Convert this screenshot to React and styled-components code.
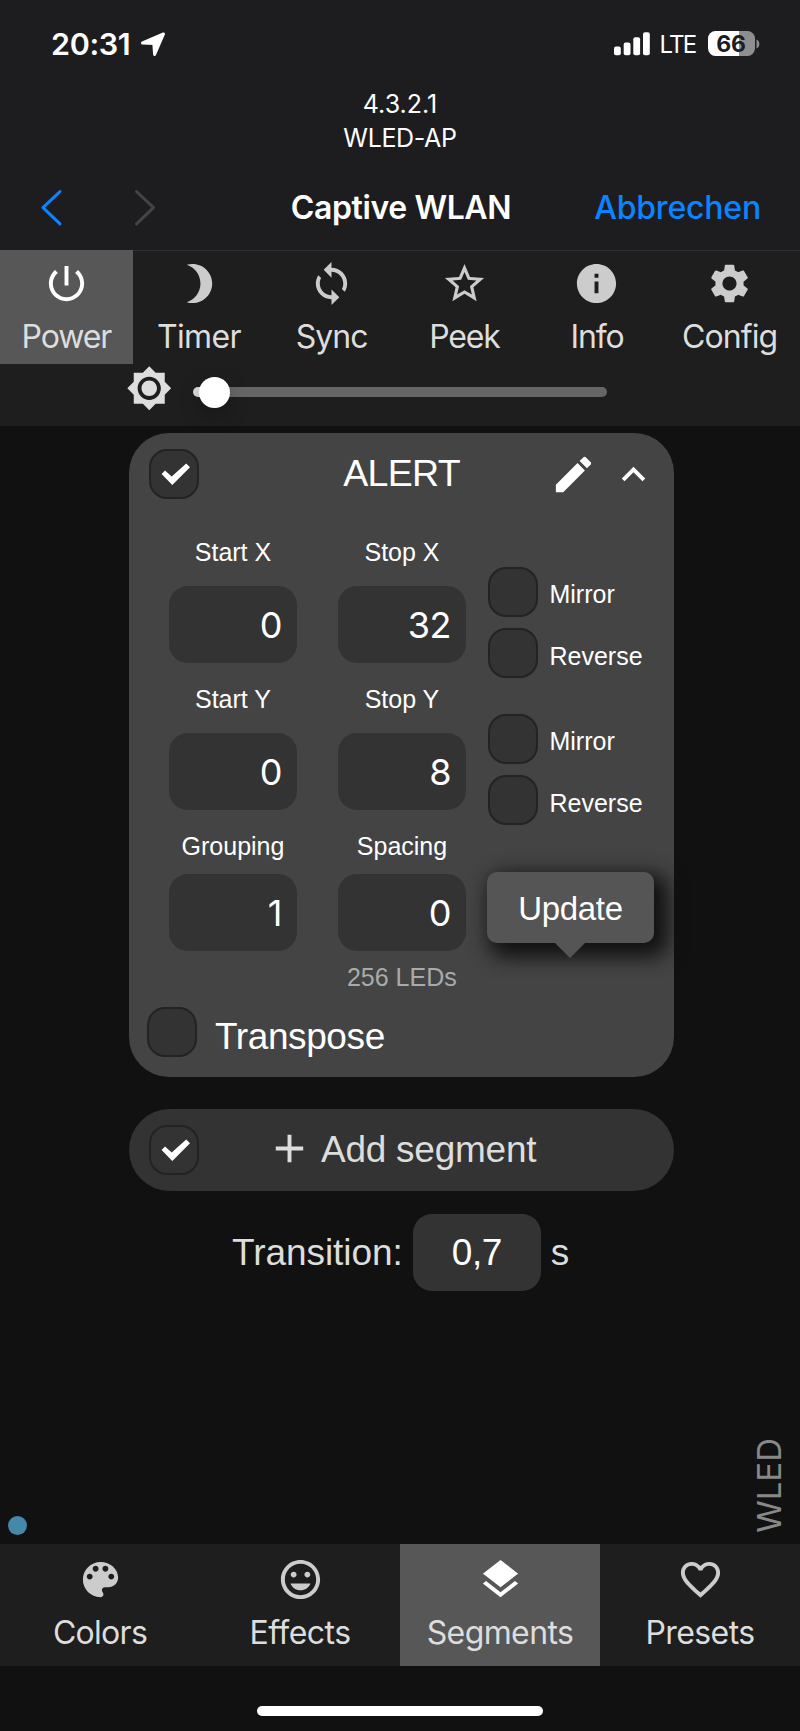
import React from "react";
import styled, { createGlobalStyle } from "styled-components";

const GlobalStyle = createGlobalStyle`
  * { box-sizing: border-box; }
  body { margin: 0; background: #111; }
`;

const ui = `Inter, "Liberation Sans", sans-serif`;
const helv = `"Liberation Sans", Arial, sans-serif`;

const Page = styled.div`
  width: 800px;
  height: 1731px;
  display: flex;
  flex-direction: column;
  background: #111;
  color: #fff;
  font-family: ${helv};
  overflow: hidden;
`;

const Header = styled.header`
  height: 250px;
  background: #1d1d1f;
  font-family: ${ui};
`;

const StatusBar = styled.div`
  height: 87px;
  display: flex;
  align-items: center;
  justify-content: space-between;
  padding: 0 40.5px 0 51px;
`;

const StatusGroup = styled.div`
  display: flex;
  align-items: center;
`;

const Clock = styled.span`
  font-size: 30.5px;
  font-weight: 600;
  line-height: 40px;
  letter-spacing: -0.35px;
  margin-right: 10px;
`;

const Carrier = styled.span`
  font-size: 24px;
  line-height: 30px;
  letter-spacing: -1.7px;
  margin: 2px 12px 0 9px;
`;

const Battery = styled.div`
  width: 47px;
  height: 25px;
  border-radius: 7.5px;
  background: linear-gradient(to right, #fff 31px, #8e8e8f 31px);
  color: #1d1d1f;
  font-size: 23px;
  font-weight: 700;
  line-height: 26px;
  text-align: center;
  letter-spacing: -0.3px;
`;

const NetworkInfo = styled.div`
  font-size: 25px;
  line-height: 34px;
  text-align: center;
  height: 68px;
`;

const InfoLine = styled.div`
  letter-spacing: ${(p) => p.$track}px;
`;

const TitleBar = styled.div`
  display: grid;
  grid-template-columns: 200px 1fr 200px;
  align-items: center;
  height: 95px;
  padding: 10px 39px 0 39px;
  font-size: 32px;
  line-height: 40px;
`;

const Arrows = styled.div`
  display: flex;
  gap: 69px;
`;

const Title = styled.div`
  font-weight: 600;
  text-align: center;
  white-space: nowrap;
  letter-spacing: -0.4px;
  padding-left: 2px;
`;

const Cancel = styled.div`
  color: #0a84ff;
  font-weight: 500;
  text-align: right;
  letter-spacing: -0.2px;
`;

const TabBar = styled.nav`
  display: grid;
  grid-template-columns: repeat(${(p) => p.$count}, 1fr);
  height: ${(p) => p.$height}px;
  padding-right: ${(p) => (p.$ruled ? 4 : 0)}px;
  background: #1e1e1e;
  box-shadow: ${(p) => (p.$ruled ? "inset 0 1px 0 #2e2e30" : "none")};
  flex: none;
`;

const TabItem = styled.div`
  display: flex;
  flex-direction: column;
  align-items: center;
  min-width: 0;
  padding-top: ${(p) => p.$top}px;
  background: ${(p) => (p.$active ? "#575757" : "transparent")};
  color: ${(p) => (p.$active ? "#fff" : "#ccc")};
`;

const TabLabel = styled.span`
  margin-top: 10px;
  color: #ddd;
  font-family: ${ui};
  font-size: 32px;
  line-height: 40px;
  letter-spacing: ${(p) => p.$track}px;
`;

const BrightnessRow = styled.div`
  height: 61.5px;
  background: #1e1e1e;
  display: flex;
  padding: 1px 0 0 125.5px;
  color: #ddd;
  flex: none;
`;

const Track = styled.div`
  width: 414px;
  height: 10px;
  margin: 22px 0 0 21px;
  border-radius: 5px;
  background: linear-gradient(to right, #ddd 21px, #666 21px);
  display: flex;
  align-items: center;
  padding-left: 6px;
`;

const Thumb = styled.div`
  width: 31px;
  height: 31px;
  border-radius: 50%;
  background: #fff;
  box-shadow: 0 8px 20px rgba(0, 0, 0, 0.25);
  flex: none;
`;

const Content = styled.main`
  flex: 1;
  display: flex;
  flex-direction: column;
  padding-top: 7.5px;
`;

const Card = styled.section`
  width: 545px;
  height: 644px;
  margin-left: 129.3px;
  border-radius: 40px;
  background: #444;
`;

const CardHeader = styled.div`
  display: grid;
  grid-template-columns: 140px 1fr 140px;
  align-items: center;
  height: 82px;
  padding: 0 17px 0 19.7px;
`;

const SegmentName = styled.div`
  font-size: 37.5px;
  line-height: 44px;
  text-align: center;
  letter-spacing: -0.7px;
  padding: 0 3px 2px 0;
`;

const HeaderActions = styled.div`
  display: flex;
  justify-content: flex-end;
  gap: 13px;
`;

const Box = styled.span`
  display: block;
  flex: none;
  width: 50px;
  height: 50px;
  border-radius: 18px;
  border: 2px solid #232323;
  background: #333;
`;

const Fields = styled.div`
  display: grid;
  grid-template-columns: 169px 150px 1fr;
  grid-template-rows: 147px 147px 120px;
  padding: 22px 0 0 39.7px;
`;

const Field = styled.label`
  display: flex;
  flex-direction: column;
  gap: ${(p) => (p.$tight ? 13 : 19)}px;
  width: 128px;
`;

const FieldLabel = styled.span`
  font-size: 25px;
  line-height: 30px;
  text-align: center;
`;

const NumberBox = styled.span`
  display: block;
  width: 128px;
  height: 77px;
  border-radius: 19px;
  background: #333;
  color: #fff;
  font-family: ${(p) => (p.$center ? helv : ui)};
  font-size: ${(p) => (p.$center ? 37 : 36)}px;
  line-height: ${(p) => (p.$center ? 78 : 79)}px;
  text-align: ${(p) => (p.$center ? "center" : "right")};
  padding-right: ${(p) => (p.$center ? 0 : 15)}px;
  letter-spacing: -0.5px;
`;

const Flags = styled.div`
  display: flex;
  flex-direction: column;
  gap: 11.5px;
  padding-top: 29.5px;
`;

const Flag = styled.div`
  display: flex;
  align-items: center;
  gap: ${(p) => (p.$large ? 18 : 11.5)}px;
  font-size: ${(p) => (p.$large ? 37 : 25)}px;
  line-height: 40px;
  letter-spacing: ${(p) => (p.$large ? -0.4 : 0)}px;
`;

const FlagText = styled.span`
  padding-top: ${(p) => (p.$large ? 10 : 5)}px;
`;

const UpdateButton = styled.div`
  position: relative;
  width: 167px;
  height: 71px;
  margin: 41px 0 0 -1px;
  border-radius: 10px;
  background: #555;
  box-shadow: 8px 8px 20px 6px #111;
  font-size: 33px;
  line-height: 73px;
  text-align: center;
  letter-spacing: -0.3px;

  &::after {
    content: "";
    position: absolute;
    top: 100%;
    left: 68px;
    border: 15.5px solid transparent;
    border-top-color: #555;
    border-bottom: 0;
  }
`;

const LedCount = styled.div`
  padding-top: 11px;
  color: #aaa;
  font-size: 25px;
  line-height: 30px;
  text-align: center;
`;

const TransposeRow = styled.div`
  padding: 15px 0 0 17.7px;
`;

const AddSegment = styled.div`
  display: flex;
  align-items: center;
  width: 545px;
  height: 81.4px;
  margin: 32.3px 0 0 129.3px;
  padding-left: 19.7px;
  border-radius: 41px;
  background: #333;
  color: #ddd;
  font-size: 37px;
  line-height: 44px;
  letter-spacing: -0.25px;

  svg.plus { margin: 0 8px 3px 67px; }
`;

const AddText = styled.span`
  padding-bottom: 0;
`;

const TransitionRow = styled.div`
  display: flex;
  align-items: center;
  gap: 10px;
  margin: 23.5px 0 0 232px;
  color: #ddd;
  font-size: 37px;
  line-height: 44px;
`;

const TransitionText = styled.span`
  letter-spacing: -0.05px;
  padding-top: 1px;
`;

const FooterRow = styled.div`
  flex: 1;
  display: flex;
  align-items: flex-end;
  justify-content: space-between;
  padding: 0 11px 0 7.5px;
`;

const Dot = styled.span`
  width: 19.5px;
  height: 19.5px;
  margin-bottom: 9px;
  border-radius: 50%;
  background: #48a;
`;

const Brand = styled.span`
  writing-mode: vertical-rl;
  transform: rotate(180deg);
  margin-bottom: 11.5px;
  color: #888;
  font-family: ${ui};
  font-size: 33px;
  line-height: 40px;
  letter-spacing: 0;
`;

const HomeArea = styled.div`
  flex: none;
  height: 65px;
  display: flex;
  justify-content: center;
  padding-top: 39.5px;
`;

const HomeIndicator = styled.div`
  width: 286px;
  height: 10px;
  border-radius: 5px;
  background: #fff;
`;

const paths = {
  power: "M13 3h-2v10h2V3zm4.83 2.17l-1.42 1.42C17.99 7.86 19 9.81 19 12c0 3.87-3.13 7-7 7s-7-3.13-7-7c0-2.19 1.01-4.14 2.58-5.42L6.17 5.17C4.23 6.82 3 9.26 3 12c0 4.97 4.03 9 9 9s9-4.03 9-9c0-2.74-1.23-5.18-3.17-6.83z",
  moon: "M9 2c-1.05 0-2.05.16-3 .46 4.06 1.27 7 5.06 7 9.54 0 4.48-2.94 8.27-7 9.54.95.3 1.95.46 3 .46 5.52 0 10-4.48 10-10S14.52 2 9 2z",
  sync: "M12 4V1L8 5l4 4V6c3.31 0 6 2.69 6 6 0 1.01-.25 1.97-.7 2.8l1.46 1.46C19.54 15.03 20 13.57 20 12c0-4.42-3.58-8-8-8zm0 14c-3.31 0-6-2.69-6-6 0-1.01.25-1.97.7-2.8L5.24 7.74C4.46 8.97 4 10.43 4 12c0 4.42 3.58 8 8 8v3l4-4-4-4v3z",
  star: "M22 9.24l-7.19-.62L12 2 9.19 8.63 2 9.24l5.46 4.73L5.82 21 12 17.27 18.18 21l-1.63-7.03L22 9.24zM12 15.4l-3.76 2.27 1-4.28-3.32-2.88 4.38-.38L12 6.1l1.71 4.04 4.38.38-3.32 2.88 1 4.28L12 15.4z",
  info: "M12 2C6.48 2 2 6.48 2 12s4.48 10 10 10 10-4.48 10-10S17.52 2 12 2zm1 15h-2v-6h2v6zm0-8h-2V7h2v2z",
  gear: "M19.14 12.94c.04-.3.06-.61.06-.94 0-.32-.02-.64-.07-.94l2.03-1.58c.18-.14.23-.41.12-.61l-1.92-3.32c-.12-.22-.37-.29-.59-.22l-2.39.96c-.5-.38-1.03-.7-1.62-.94l-.36-2.54c-.04-.24-.24-.41-.48-.41h-3.84c-.24 0-.43.17-.47.41l-.36 2.54c-.59.24-1.13.57-1.62.94l-2.39-.96c-.22-.08-.47 0-.59.22L2.74 8.87c-.12.21-.08.47.12.61l2.03 1.58c-.05.3-.09.63-.09.94s.02.64.07.94l-2.03 1.58c-.18.14-.23.41-.12.61l1.92 3.32c.12.22.37.29.59.22l2.39-.96c.5.38 1.03.7 1.62.94l.36 2.54c.05.24.24.41.48.41h3.84c.24 0 .44-.17.47-.41l.36-2.54c.59-.24 1.13-.56 1.62-.94l2.39.96c.22.08.47 0 .59-.22l1.92-3.32c.12-.22.07-.47-.12-.61l-2.01-1.58zM12 15.6c-1.98 0-3.6-1.62-3.6-3.6s1.62-3.6 3.6-3.6 3.6 1.62 3.6 3.6-1.62 3.6-3.6 3.6z",
  sun: "M20 8.69V4h-4.69L12 .69 8.69 4H4v4.69L.69 12 4 15.31V20h4.69L12 23.31 15.31 20H20v-4.69L23.31 12 20 8.69zM12 18c-3.31 0-6-2.69-6-6s2.69-6 6-6 6 2.69 6 6-2.69 6-6 6zm0-10c-2.21 0-4 1.79-4 4s1.79 4 4 4 4-1.79 4-4-1.79-4-4-4z",
  pencil: "M3 17.25V21h3.75L17.81 9.94l-3.75-3.75L3 17.25zM20.71 7.04c.39-.39.39-1.02 0-1.41l-2.34-2.34c-.39-.39-1.02-.39-1.41 0l-1.83 1.83 3.75 3.75 1.83-1.83z",
  up: "M12 8l-6 6 1.41 1.41L12 10.83l4.59 4.58L18 14z",
  plus: "M19 13h-6v6h-2v-6H5v-2h6V5h2v6h6v2z",
  palette: "M12 3c-4.97 0-9 4.03-9 9s4.03 9 9 9c.83 0 1.5-.67 1.5-1.5 0-.39-.15-.74-.39-1.01-.23-.26-.38-.61-.38-.99 0-.83.67-1.5 1.5-1.5H16c2.76 0 5-2.24 5-5 0-4.42-4.03-8-9-8zm-5.5 9c-.83 0-1.5-.67-1.5-1.5S5.67 9 6.5 9 8 9.67 8 10.5 7.33 12 6.5 12zm3-4C8.67 8 8 7.33 8 6.5S8.67 5 9.5 5s1.5.67 1.5 1.5S10.33 8 9.5 8zm5 0c-.83 0-1.5-.67-1.5-1.5S13.67 5 14.5 5s1.5.67 1.5 1.5S15.33 8 14.5 8zm3 4c-.83 0-1.5-.67-1.5-1.5S16.67 9 17.5 9s1.5.67 1.5 1.5-.67 1.5-1.5 1.5z",
  smile: "M11.99 2C6.47 2 2 6.48 2 12s4.47 10 9.99 10C17.52 22 22 17.52 22 12S17.52 2 11.99 2zM12 20c-4.42 0-8-3.58-8-8s3.58-8 8-8 8 3.58 8 8-3.58 8-8 8zm3.5-9c.83 0 1.5-.67 1.5-1.5S16.33 8 15.5 8 14 8.67 14 9.5s.67 1.5 1.5 1.5zm-7 0c.83 0 1.5-.67 1.5-1.5S9.33 8 8.5 8 7 8.67 7 9.5 7.67 11 8.5 11zm3.5 6.5c2.33 0 4.31-1.46 5.11-3.5H6.89c.8 2.04 2.78 3.5 5.11 3.5z",
  layers: "M11.99 18.54l-7.37-5.73L3 14.07l9 7 9-7-1.63-1.27-7.38 5.74zM12 16l7.36-5.73L21 9l-9-7-9 7 1.63 1.27L12 16z",
  heart: "M16.5 3c-1.74 0-3.41.81-4.5 2.09C10.91 3.81 9.24 3 7.5 3 4.42 3 2 5.42 2 8.5c0 3.78 3.4 6.86 8.55 11.54L12 21.35l1.45-1.32C18.6 15.36 22 12.28 22 8.5 22 5.42 19.58 3 16.5 3zm-4.4 15.55l-.1.1-.1-.1C7.14 14.24 4 11.39 4 8.5 4 6.5 5.5 5 7.5 5c1.54 0 3.04.99 3.57 2.36h1.87C13.46 5.99 14.96 5 16.5 5c2 0 3.5 1.5 3.5 3.5 0 2.89-3.14 5.74-7.9 10.05z",
};

const Icon = ({ name, size = 47 }) => (
  <svg className={name} width={size} height={size} viewBox="0 0 24 24" fill="currentColor">
    <path d={paths[name]} />
  </svg>
);

const Chevron = ({ forward }) => (
  <svg width="25" height="40" viewBox="0 0 25 40" fill="none">
    <path
      d={forward ? "M3.5 3.5L20.5 19.7L3.5 35.9" : "M21 3.5L4 19.7L21 35.9"}
      stroke={forward ? "#444446" : "#0a84ff"}
      strokeWidth="3"
      strokeLinecap="round"
      strokeLinejoin="round"
    />
  </svg>
);

const Checkbox = ({ checked }) => (
  <Box>
    {checked && (
      <svg width="46" height="46" viewBox="2 2 46 46" fill="#fff">
        <path d="M12.6 25L16 21.4L22.7 27.6L37.2 14.6L41 18.3L23.3 36Z" />
      </svg>
    )}
  </Box>
);

const topTabs = [
  { icon: "power", label: "Power", track: -1.1, active: true },
  { icon: "moon", label: "Timer", track: -0.6 },
  { icon: "sync", label: "Sync", track: -1 },
  { icon: "star", label: "Peek", track: -1.2 },
  { icon: "info", label: "Info", track: -1.1 },
  { icon: "gear", label: "Config", track: -0.9 },
];

const bottomTabs = [
  { icon: "palette", label: "Colors", track: -0.7 },
  { icon: "smile", label: "Effects", track: -0.5 },
  { icon: "layers", label: "Segments", track: -0.6 },
  { icon: "heart", label: "Presets", track: -0.6 },
].map((t) => ({ ...t, active: t.label === "Segments" }));

const Tabs = ({ items, height, top, ruled }) => (
  <TabBar $count={items.length} $height={height} $ruled={ruled}>
    {items.map((t) => (
      <TabItem key={t.label} $active={t.active} $top={top}>
        <Icon name={t.icon} />
        <TabLabel $track={t.track}>{t.label}</TabLabel>
      </TabItem>
    ))}
  </TabBar>
);

const NumberField = ({ label, value, tight }) => (
  <Field $tight={tight}>
    <FieldLabel>{label}</FieldLabel>
    <NumberBox>{value}</NumberBox>
  </Field>
);

const AxisFlags = () => (
  <Flags>
    {["Mirror", "Reverse"].map((f) => (
      <Flag key={f}>
        <Checkbox />
        <FlagText>{f}</FlagText>
      </Flag>
    ))}
  </Flags>
);

export default function App() {
  return (
    <Page>
      <GlobalStyle />
      <Header>
        <StatusBar>
          <StatusGroup>
            <Clock>20:31</Clock>
            <svg width="26" height="26" viewBox="0 0 26 26">
              <path d="M2.5 12L23.5 3L14.6 23.5L13.8 12.4Z" fill="#fff" stroke="#fff" strokeWidth="3" strokeLinejoin="round" />
            </svg>
          </StatusGroup>
          <StatusGroup>
            <svg width="36" height="24" viewBox="0 0 36 24" fill="#fff">
              <rect x="0" y="14.5" width="6.8" height="8.7" rx="2" />
              <rect x="9.7" y="10.5" width="6.8" height="12.7" rx="2" />
              <rect x="19.3" y="5.3" width="6.8" height="17.9" rx="2" />
              <rect x="29" y="0.3" width="6.8" height="22.9" rx="2" />
            </svg>
            <Carrier>LTE</Carrier>
            <Battery>66</Battery>
            <svg width="5" height="10" viewBox="0 0 5 10">
              <path d="M1.5 0.5C5.3 2 5.3 8 1.5 9.5Z" fill="#8e8e8f" />
            </svg>
          </StatusGroup>
        </StatusBar>
        <NetworkInfo>
          <InfoLine $track={0}>4.3.2.1</InfoLine>
          <InfoLine $track={-0.35}>WLED-AP</InfoLine>
        </NetworkInfo>
        <TitleBar>
          <Arrows>
            <Chevron />
            <Chevron forward />
          </Arrows>
          <Title>Captive WLAN</Title>
          <Cancel>Abbrechen</Cancel>
        </TitleBar>
      </Header>

      <Tabs items={topTabs} height={114} top={10} ruled />
      <BrightnessRow>
        <Icon name="sun" size={46.5} />
        <Track>
          <Thumb />
        </Track>
      </BrightnessRow>

      <Content>
        <Card>
          <CardHeader>
            <Checkbox checked />
            <SegmentName>ALERT</SegmentName>
            <HeaderActions>
              <Icon name="pencil" />
              <Icon name="up" />
            </HeaderActions>
          </CardHeader>
          <Fields>
            <NumberField label="Start X" value="0" />
            <NumberField label="Stop X" value="32" />
            <AxisFlags />
            <NumberField label="Start Y" value="0" />
            <NumberField label="Stop Y" value="8" />
            <AxisFlags />
            <NumberField label="Grouping" value="1" tight />
            <NumberField label="Spacing" value="0" tight />
            <UpdateButton>Update</UpdateButton>
          </Fields>
          <LedCount>256 LEDs</LedCount>
          <TransposeRow>
            <Flag $large>
              <Checkbox />
              <FlagText $large>Transpose</FlagText>
            </Flag>
          </TransposeRow>
        </Card>

        <AddSegment>
          <Checkbox checked />
          <Icon name="plus" />
          <AddText>Add segment</AddText>
        </AddSegment>

        <TransitionRow>
          <TransitionText>Transition:</TransitionText>
          <NumberBox $center>0,7</NumberBox>
          <span>s</span>
        </TransitionRow>

        <FooterRow>
          <Dot />
          <Brand>WLED</Brand>
        </FooterRow>
      </Content>

      <Tabs items={bottomTabs} height={122} top={12} />
      <HomeArea>
        <HomeIndicator />
      </HomeArea>
    </Page>
  );
}
